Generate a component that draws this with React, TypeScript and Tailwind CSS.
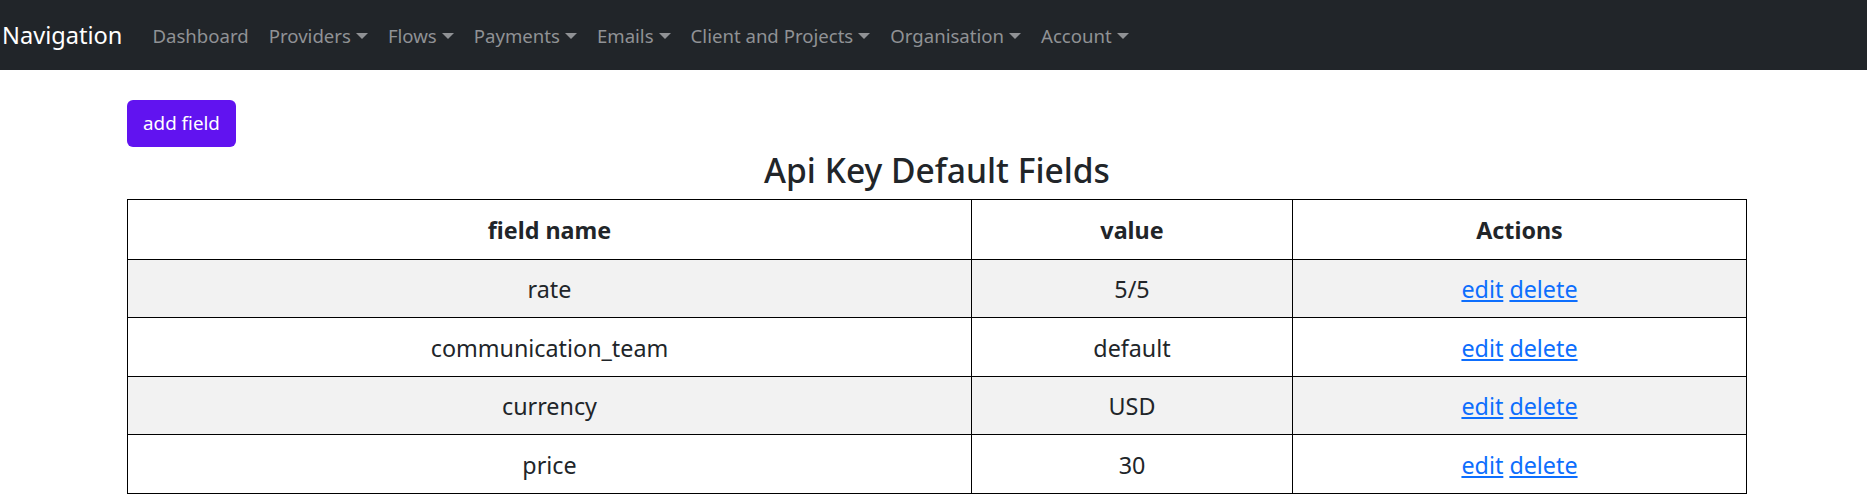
import React from "react";

const links: [string, boolean][] = [
  ["Dashboard", false],
  ["Providers", true],
  ["Flows", true],
  ["Payments", true],
  ["Emails", true],
  ["Client and Projects", true],
  ["Organisation", true],
  ["Account", true],
];

const rows = [
  ["rate", "5/5"],
  ["communication_team", "default"],
  ["currency", "USD"],
  ["price", "30"],
];

export default function App() {
  return (
    <div className="min-h-[502px] bg-white text-[#212529] font-['Noto_Sans','Open_Sans',sans-serif]">
      <nav className="flex h-[70px] items-center bg-[#212529]">
        <a className="ml-[2px] mr-[20px] text-[23.6px] leading-[38px] text-white">Navigation</a>
        <ul className="flex items-center pt-[2px]">
          {links.map(([label, caret]) => (
            <li key={label} className="flex items-center px-[10px] text-[18.6px] leading-[30px] text-[#909295]">
              {label}
              {caret && (
                <span className="ml-[5px] h-0 w-0 border-x-[6px] border-t-[6px] border-x-transparent border-t-[#909295]" />
              )}
            </li>
          ))}
        </ul>
      </nav>
      <main className="pl-[127px] pr-[120px] pt-[30px]">
        <button className="block h-[47px] w-[109px] rounded-[6px] bg-[#6113f0] text-[18.8px] text-white">add field</button>
        <h3 className="mb-[8px] mt-[2px] text-center text-[33.6px] font-medium leading-[42px]">Api Key Default Fields</h3>
        <table className="w-full table-fixed border-collapse border border-black text-center text-[23.3px] leading-[30px]">
          <colgroup>
            <col className="w-[844px]" />
            <col className="w-[321px]" />
            <col />
          </colgroup>
          <thead>
            <tr className="h-[59.5px]">
              <th className="border border-black pt-[2px] font-bold">field name</th>
              <th className="border border-black pt-[2px] font-bold">value</th>
              <th className="border border-black pt-[2px] font-bold">Actions</th>
            </tr>
          </thead>
          <tbody>
            {rows.map(([name, value], i) => (
              <tr key={name} className={i % 2 === 0 ? "h-[58.6px] bg-[#f2f2f2]" : "h-[58.6px]"}>
                <td className="border border-black pt-[2px]">{name}</td>
                <td className="border border-black pt-[2px]">{value}</td>
                <td className="border border-black pt-[2px]">
                  <a className="text-[#0d6efd] underline">edit</a> <a className="text-[#0d6efd] underline">delete</a>
                </td>
              </tr>
            ))}
          </tbody>
        </table>
      </main>
    </div>
  );
}
